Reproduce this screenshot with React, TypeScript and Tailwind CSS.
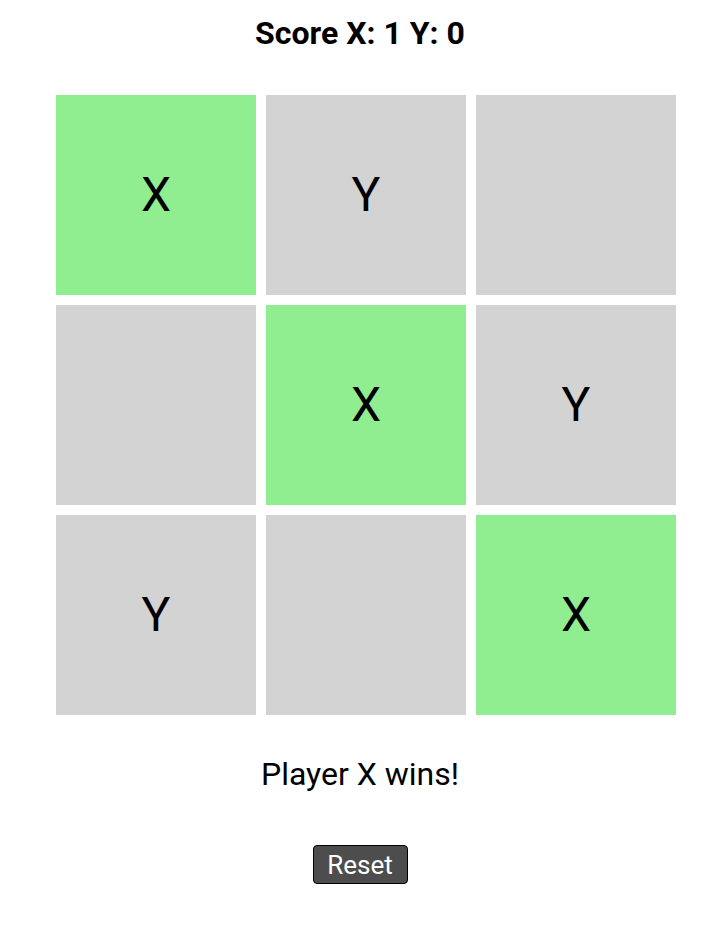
import React from "react";

const cells: { v: string; win: boolean }[] = [
  { v: "X", win: true },
  { v: "Y", win: false },
  { v: "", win: false },
  { v: "", win: false },
  { v: "X", win: true },
  { v: "Y", win: false },
  { v: "Y", win: false },
  { v: "", win: false },
  { v: "X", win: true },
];

export default function App() {
  return (
    <div
      className="w-[720px] h-[925px] bg-white flex flex-col items-center text-black"
      style={{ fontFamily: "Roboto, 'Noto Sans', sans-serif" }}
    >
      <div className="mt-[14px] h-[38px] flex items-center text-[32px] font-bold leading-none">
        Score X: 1 Y: 0
      </div>
      <div className="mt-[43px] ml-[12px] grid grid-cols-[200px_200px_200px] gap-[10px]">
        {cells.map((c, i) => (
          <div
            key={i}
            className={`w-[200px] h-[200px] flex items-center justify-center text-[48px] leading-none ${
              c.win ? "bg-[#90ee90]" : "bg-[#d3d3d3]"
            }`}
          >
            {c.v}
          </div>
        ))}
      </div>
      <div className="mt-[40px] h-[38px] flex items-center text-[32px] leading-none">
        Player X wins!
      </div>
      <button className="mt-[52px] w-[95px] h-[39px] bg-[#4d4d4d] text-white text-[26px] leading-none border border-black rounded-[4px] flex items-center justify-center">
        Reset
      </button>
    </div>
  );
}
